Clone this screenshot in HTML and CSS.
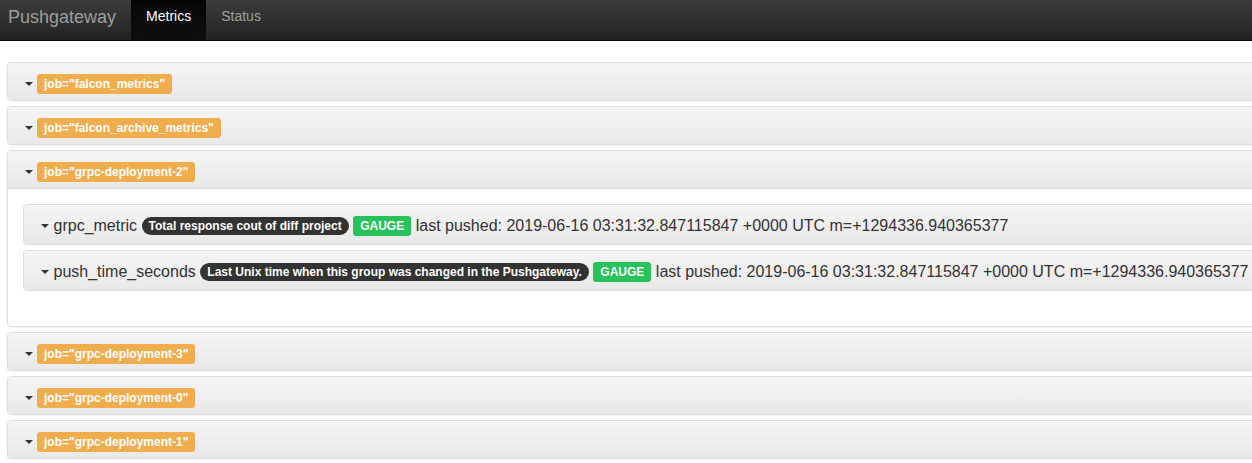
FILE: index.html
```html
<!DOCTYPE html>
<html lang="en">
<head>
<meta charset="utf-8">
<title>Pushgateway</title>
<link rel="stylesheet" href="styles.css">
</head>
<body>
<nav class="navbar">
  <span class="brand">Pushgateway</span>
  <a class="nav-link active">Metrics</a>
  <a class="nav-link">Status</a>
</nav>
<main class="main">
  <section class="panel">
    <div class="panel-heading"><span class="caret"></span><span class="label label-warning">job="falcon_metrics"</span></div>
  </section>
  <section class="panel">
    <div class="panel-heading"><span class="caret"></span><span class="label label-warning">job="falcon_archive_metrics"</span></div>
  </section>
  <section class="panel">
    <div class="panel-heading open"><span class="caret"></span><span class="label label-warning">job="grpc-deployment-2"</span></div>
    <div class="panel-body">
      <div class="panel inner">
        <div class="panel-heading metric"><span class="caret"></span><span class="metric-name">grpc_metric</span><span class="badge">Total response cout of diff project</span><span class="label label-success">GAUGE</span><span class="pushed">last pushed: 2019-06-16 03:31:32.847115847 +0000 UTC m=+1294336.940365377</span></div>
      </div>
      <div class="panel inner">
        <div class="panel-heading metric"><span class="caret"></span><span class="metric-name">push_time_seconds</span><span class="badge">Last Unix time when this group was changed in the Pushgateway.</span><span class="label label-success">GAUGE</span><span class="pushed">last pushed: 2019-06-16 03:31:32.847115847 +0000 UTC m=+1294336.940365377</span></div>
      </div>
    </div>
  </section>
  <section class="panel">
    <div class="panel-heading"><span class="caret"></span><span class="label label-warning">job="grpc-deployment-3"</span></div>
  </section>
  <section class="panel">
    <div class="panel-heading"><span class="caret"></span><span class="label label-warning">job="grpc-deployment-0"</span></div>
  </section>
  <section class="panel">
    <div class="panel-heading"><span class="caret"></span><span class="label label-warning">job="grpc-deployment-1"</span></div>
  </section>
</main>
</body>
</html>
```
FILE: styles.css
```css
html, body {
  margin: 0;
  padding: 0;
}
body {
  font-family: "Liberation Sans", Arial, Helvetica, sans-serif;
  font-size: 14px;
  color: #333;
  background: #fff;
  overflow-x: hidden;
}
.navbar {
  display: flex;
  height: 40px;
  border-bottom: 1px solid #080808;
  background: linear-gradient(to bottom, #3c3c3c 0%, #222 100%);
}
.brand {
  padding: 7px 15px 0 8px;
  font-size: 18px;
  line-height: 20px;
  color: #9d9d9d;
}
.nav-link {
  padding: 6px 15px 0;
  line-height: 20px;
  color: #9d9d9d;
  text-decoration: none;
}
.nav-link.active {
  color: #fff;
  background: linear-gradient(to bottom, #080808 0%, #0f0f0f 100%);
  box-shadow: inset 0 3px 9px rgba(0, 0, 0, 0.25);
}
.main {
  padding: 21px 0 0 7px;
  margin-right: -30px;
}
.panel {
  border: 1px solid #ddd;
  border-radius: 4px;
  margin-bottom: 5px;
  background: #fff;
  box-shadow: 0 1px 2px rgba(0, 0, 0, 0.05);
  overflow: hidden;
}
.panel-heading {
  box-sizing: border-box;
  height: 37px;
  padding: 5px 15px 0;
  display: flex;
  align-items: center;
  white-space: nowrap;
  background: linear-gradient(to bottom, #f5f5f5 0%, #e8e8e8 100%);
}
.panel-heading.open {
  height: 38px;
  border-bottom: 1px solid #ddd;
}
.caret {
  display: inline-block;
  width: 0;
  height: 0;
  margin-left: 2px;
  margin-right: 4px;
  border-top: 4px solid #333;
  border-left: 4px solid transparent;
  border-right: 4px solid transparent;
}
.label {
  display: inline-block;
  padding: 4px 7px;
  font-size: 12px;
  font-weight: bold;
  line-height: 12px;
  color: #fff;
  border-radius: 3px;
  white-space: nowrap;
}
.label-warning {
  background: #f0ad4e;
}
.label-success {
  background: #26c35a;
}
.panel-body {
  padding: 15px 15px 30px;
}
.panel.inner {
  box-shadow: none;
}
.panel-heading.metric {
  height: 39px;
  padding-top: 3px;
  font-size: 16px;
  gap: 4.5px;
}
.panel-heading.metric .caret {
  margin-right: 0;
}
.metric-name, .pushed {
  line-height: 18px;
}
.badge {
  display: inline-block;
  padding: 3px 7px;
  font-size: 12px;
  font-weight: bold;
  line-height: 12px;
  color: #fff;
  background: #333;
  border-radius: 10px;
}
```
